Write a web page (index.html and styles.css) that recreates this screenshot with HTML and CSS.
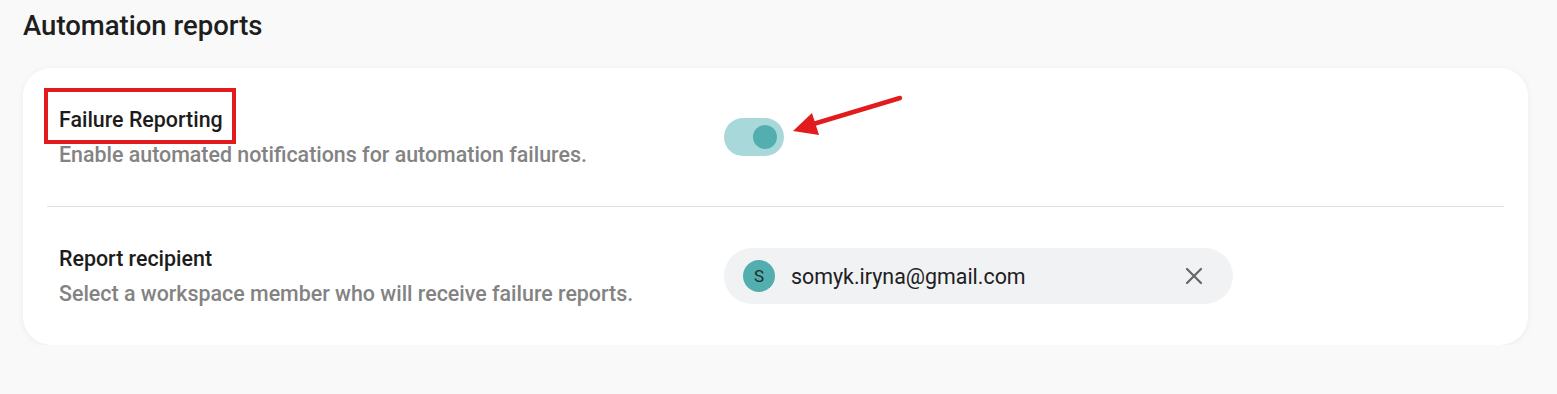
FILE: index.html
```html
<!DOCTYPE html>
<html>
<head>
    <meta name="viewport" content="width=device-width, initial-scale=1.0">
    <link rel="stylesheet" href="styles.css">
</head>
<body>
    <h2 class="page-title">Automation reports</h2>

    <div class="card">
        <div class="setting-row">
            <div class="setting-text">
                <div class="setting-label marked">Failure Reporting</div>
                <div class="setting-desc">Enable automated notifications for automation failures.</div>
            </div>
            <div class="setting-control">
                <div class="toggle on">
                    <div class="knob"></div>
                </div>
                <svg class="pointer-arrow" width="130" height="50" viewBox="0 0 130 50">
                    <line x1="124" y1="4" x2="34" y2="31" stroke="#e21c1c" stroke-width="4.5" stroke-linecap="round"/>
                    <polygon points="17,37 36,19 43,41" fill="#e21c1c"/>
                </svg>
            </div>
        </div>

        <div class="divider"></div>

        <div class="setting-row">
            <div class="setting-text">
                <div class="setting-label">Report recipient</div>
                <div class="setting-desc">Select a workspace member who will receive failure reports.</div>
            </div>
            <div class="setting-control">
                <div class="chip">
                    <div class="avatar">S</div>
                    <span class="chip-email">somyk.iryna@gmail.com</span>
                    <button class="chip-clear">
                        <svg width="18" height="18" viewBox="0 0 18 18">
                            <path d="M2 2 L16 16 M16 2 L2 16" stroke="#666" stroke-width="2.2" stroke-linecap="round"/>
                        </svg>
                    </button>
                </div>
            </div>
        </div>
    </div>
</body>
</html>
```

FILE: styles.css
```css
* {margin: 0; padding: 0; box-sizing: border-box;}
body {
    background: #f9f9f9;
    font-family: Roboto, "Noto Sans", sans-serif;
    padding: 10px 29px 0 23px;
    color: #1c1c1c;
}

.page-title {
    font-size: 27.5px;
    font-weight: 500;
    line-height: 32px;
    color: #1e1e1e;
}

.card {
    margin-top: 26px;
    background: #fff;
    border-radius: 28px;
    padding: 0 24px;
    box-shadow: 0 1px 6px rgba(0,0,0,0.06);
}

.setting-row {
    display: grid;
    grid-template-columns: 665px 1fr;
    align-items: center;
    height: 138px;
    padding: 0 12px;
}

.setting-label {
    font-size: 21.4px;
    font-weight: 500;
    line-height: 24px;
    color: #1c1c1c;
}

.marked {
    position: relative;
    display: inline-block;
}

.marked::after {
    content: '';
    position: absolute;
    left: -15px;
    right: -13px;
    top: -20px;
    bottom: -12px;
    border: 4px solid #e21c1c;
}

.setting-desc {
    margin-top: 11px;
    font-size: 21.4px;
    font-weight: 500;
    line-height: 24px;
    color: #838383;
}

.setting-control {
    position: relative;
    display: flex;
    align-items: center;
}

.toggle {
    width: 60px;
    height: 38px;
    border-radius: 19px;
    background: #a9d8da;
    display: flex;
    align-items: center;
    justify-content: flex-end;
    padding-right: 7px;
}

.knob {
    width: 24px;
    height: 24px;
    border-radius: 50%;
    background: #53afaf;
}

.pointer-arrow {
    position: absolute;
    left: 52px;
    top: -24px;
}

.divider {
    height: 1px;
    background: #e0e0e0;
}

.chip {
    width: 509px;
    height: 56px;
    border-radius: 28px;
    background: #f1f2f4;
    display: flex;
    align-items: center;
    padding: 0 30px 0 19px;
}

.avatar {
    width: 32px;
    height: 32px;
    border-radius: 50%;
    background: #53afaf;
    color: #1d2b2b;
    font-size: 17px;
    display: flex;
    align-items: center;
    justify-content: center;
}

.chip-email {
    margin-left: 16px;
    font-size: 21.4px;
    color: #202020;
    flex: 1;
}

.chip-clear {
    border: none;
    background: none;
    display: flex;
    cursor: pointer;
}
```
